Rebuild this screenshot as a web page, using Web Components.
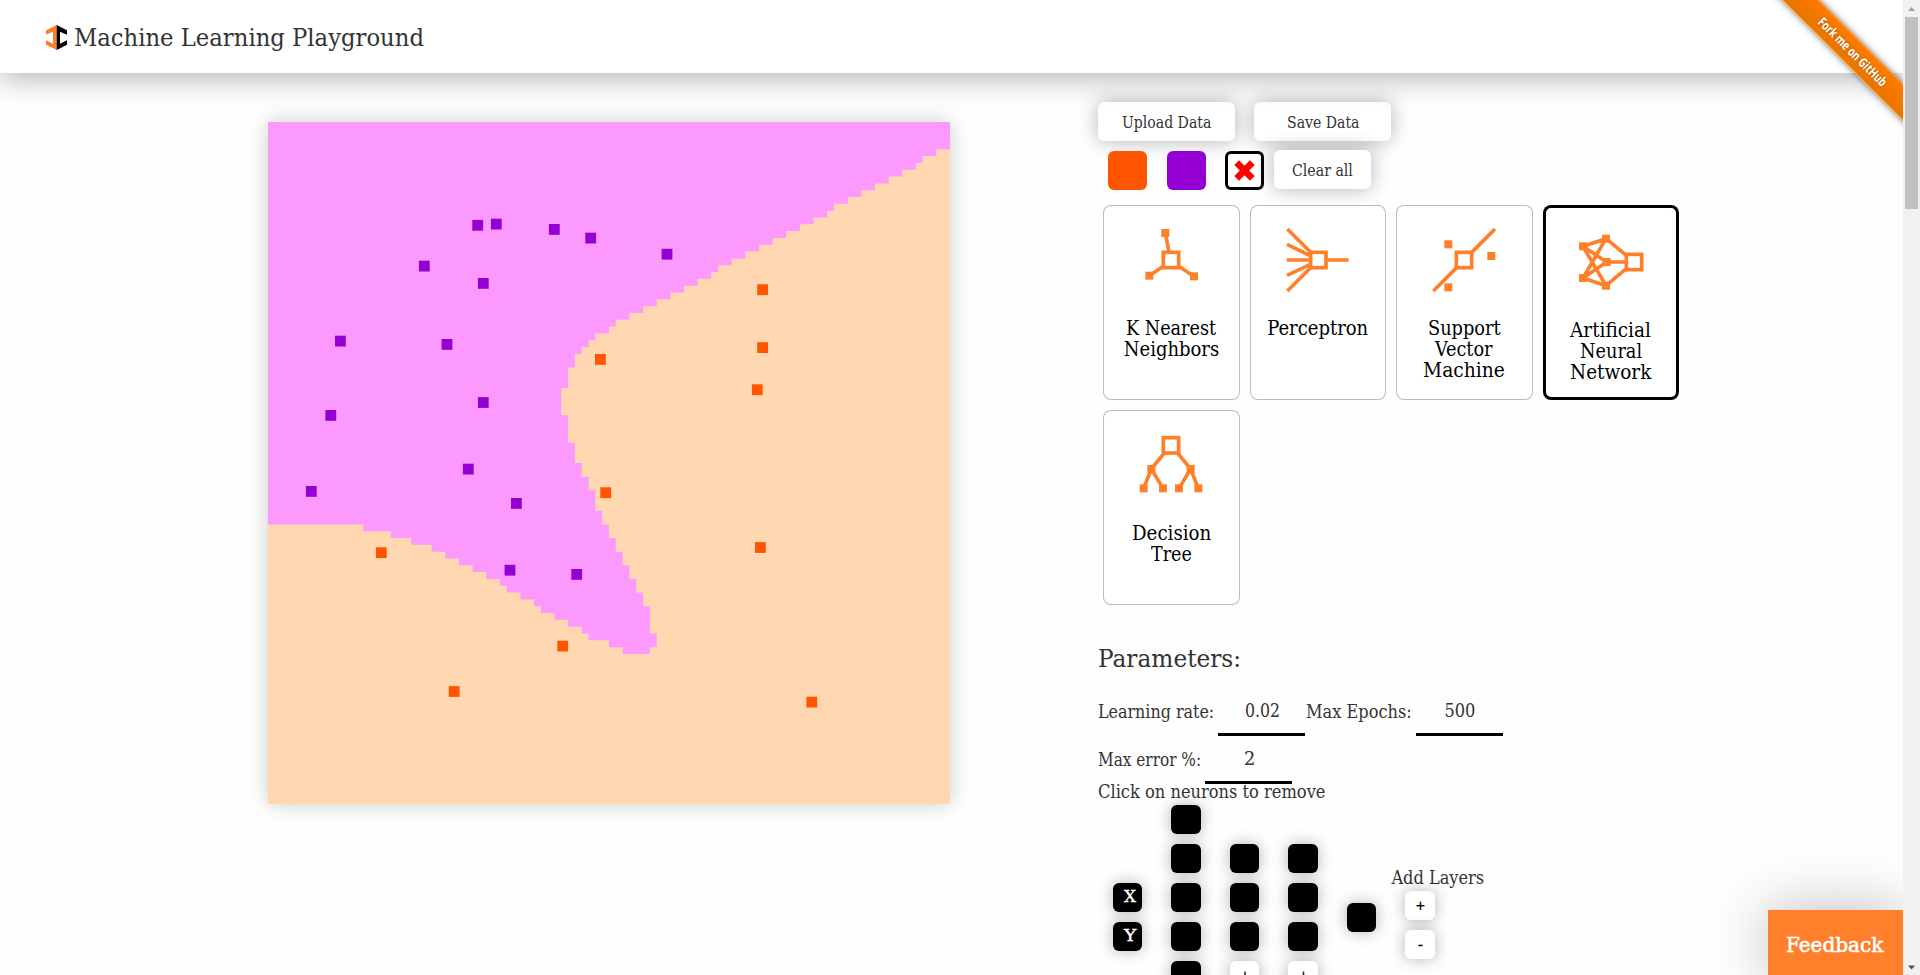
<!DOCTYPE html>
<html lang="en">
<head>
<meta charset="utf-8">
<title>Machine Learning Playground</title>
<style>
html,body{margin:0;height:975px;overflow:hidden;background:#fefefe}
body{font-family:"Roboto Slab","DejaVu Serif Condensed","DejaVu Serif",serif;color:#333}
</style>
</head>
<body>
<ml-app></ml-app>
<script>
const define = (name, css, html, setup) => customElements.define(name, class extends HTMLElement {
  connectedCallback() {
    if (this.shadowRoot) return;
    const t = document.createElement('template');
    t.innerHTML = `<style>${css}</style>${typeof html === 'function' ? html(this) : html}`;
    this.attachShadow({ mode: 'open' }).append(t.content.cloneNode(true));
    if (setup) setup(this, this.shadowRoot);
  }
});

// Text condensed horizontally to a set advance width
define('fit-text', ':host{display:inline-block;white-space:nowrap;text-align:left}span{display:inline-block;transform-origin:0 50%}', '<span><slot></slot></span>', (el, root) => {
  const span = root.querySelector('span'), w = +el.getAttribute('w');
  const natural = span.offsetWidth;
  el.style.width = w + 'px';
  span.style.transform = `scaleX(${w / natural})`;
});

define('app-logo', ':host{display:block;width:21px;height:25px}svg{display:block}',
  `<svg width="21" height="25" viewBox="0 0 63 75"><path fill="#ff7f2a" d="M32 0L0 16v13l21-9v36L0 46v13l32 16z"/><path d="M32 0l31 16v13l-21-9v36l21-10v13L32 75z"/></svg>`);

define('app-header', `:host{display:flex;align-items:center;box-sizing:border-box;height:73px;padding-left:46px;background:#fff;position:relative;
  box-shadow:0 5px 30px rgba(0,0,0,.3)}
  app-logo{margin:2px 6.500px 0 0}h1{margin:2px 0 0;font-weight:400;font-size:24px;line-height:30px}`,
  `<app-logo></app-logo><h1><fit-text w="349.5">Machine Learning Playground</fit-text></h1>`);

define('github-ribbon', `:host{position:absolute;top:0;right:17px;width:149px;height:149px;overflow:hidden}
  .band{position:absolute;left:-2px;top:38.3px;width:200px;height:27.300px;box-sizing:border-box;transform:rotate(45deg);background:linear-gradient(#ff7b00,#e87600);
  border-top:1px solid #ff922f;border-bottom:1px solid #f5a14c;box-shadow:0 0 6px rgba(0,0,0,.5);
  color:#fff;font:bold 13px/24px "Open Sans","Noto Sans",sans-serif;text-align:center;text-shadow:0 0 3px rgba(0,0,0,.35)}`,
  `<div class="band"><fit-text w="91">Fork me on GitHub</fit-text></div>`);

define('page-scrollbar', `:host{display:flex;flex-direction:column;align-items:center;width:17px;height:975px;background:#f1f1f1;position:relative}
  svg{display:block}i{display:block;width:13px;height:192px;background:#c1c1c1;flex:none}.sp{flex:1}`,
  `<svg width="17" height="17"><path d="M5 11h7L8.500 7z" fill="#a3a3a3"/></svg><i></i><div class="sp"></div><svg width="17" height="17"><path d="M5 7.500h7l-3.500 4z" fill="#505050"/></svg>`);

// Decision regions on a 100x100 grid with the training points on top
define('data-plot', ':host{display:block;width:682px;height:682px;box-shadow:0 0 20px rgba(0,0,0,.2);flex:none}svg{display:block}', () => {
  // First purple column of each row
  const start = r => r < 59 ? 0 : [14,18,21,24,26,28,30,32,34,35,37,39,40,42,44,46,47,50,52][r - 59];
  const top = [98,96,95,93,91,89,87,85,83,82,80,78,76,74,72,70,68,66,65,63,61,59,57,55,53,51,50,48,47,46,45,45];
  // [first orange column, number of rows]
  const runs = [[44,3],[43,4],[44,4],[45,3],[46,2],[47,2],[48,3],[49,2],[50,2],[51,2],[52,2],[53,2],[54,2],[55,2],[56,4],[57,2],[56,1]];
  const ends = [100,100,100,100,...top];
  for (const [c, n] of runs) for (let i = 0; i < n; i++) ends.push(c);
  let d = `M0 0H${ends[0]}`;
  ends.forEach((c, r) => d += `H${c}V${r + 1}`);
  for (let r = ends.length - 1; r >= 0; r--) d += `H${start(r)}V${r}`;
  const purple = [[477.7,225.2],[496.3,224],[554.3,229.3],[590.7,238],[424.3,266],[483.3,283.3],[340.4,341],[447,344.3],[483.3,402.4],[330.8,415.3],[468.3,469],[311.3,491.3],[516.4,503.3],[667,254.1],[576.7,574.3],[510,570.1]];
  const orange = [[600.4,359.3],[605.7,492.6],[762.6,289.6],[762.6,347.5],[757.3,389.6],[760.4,547.4],[562.7,646],[381.3,552.6],[454.2,691.4],[811.8,702]];
  const pts = (a, f) => a.map(([x, y]) => `<rect x="${(x - 273.4).toFixed(2)}" y="${(y - 127.3).toFixed(2)}" width="10.8" height="10.8" fill="${f}"/>`).join('');
  return `<svg width="682" height="682"><rect width="682" height="682" fill="#ffd8b1"/><path transform="scale(6.82)" fill="#fb99ff" d="${d}"/>${pts(purple, '#9400d3')}${pts(orange, '#ff5500')}</svg>`;
});

define('ui-button', `:host{display:flex;align-items:center;justify-content:center;box-sizing:border-box;height:39px;border-radius:6px;background:#fff;
  box-shadow:0 0 20px rgba(0,0,0,.3);font-size:16.500px;line-height:20px;color:#333;padding-top:3px}`, '<slot></slot>');

define('color-swatch', ':host{display:block;box-sizing:border-box;width:39px;height:39px;border-radius:6px}:host([erase]){border:3px solid #000;background:#fff}svg{display:block}',
  el => el.hasAttribute('erase') ? '<svg width="33" height="33" viewBox="0 0 99 99"><path d="M26 26L73 73M73 26L26 73" stroke="#f00" stroke-width="20"/></svg>' : '');

const N = (...p) => p.map(([x, y]) => `<rect x="${x - 12}" y="${y - 12}" width="24" height="24" fill="#ff7f2a" stroke="none"/>`).join('');
const BOX = (x, y) => `<rect x="${x - 23}" y="${y - 23}" width="46" height="46"/>`;
const ICONS = {
  knn: `${BOX(204,165)}<path d="M187 84L198 141M139 212L181 184M273 214L227 184"/>${N([187,84],[139,212],[273,214])}`,
  perceptron: `${BOX(208,165)}<path d="M235 165H299M115 72L184 141M114 118L184 152M113 165H184M114 211L184 178M115 258L184 189"/>`,
  svm: `${BOX(204,165)}<path d="M297 72L227 142M112 258L182 188"/>${N([157,118],[286,153],[157,247])}`,
  ann: `${BOX(276,171)}<path d="M123 124L192 101M123 124L194 171M123 124L192 242M123 219L192 101M123 219L194 171M123 219L192 242M192 101L253 151M194 171H252M192 242L253 191"/>${N([123,124],[123,219],[192,101],[194,171],[192,242])}`,
  tree: `${BOX(204,106)}<path d="M185 128L145 177L122 235M145 177L180 235M223 128L263 177L228 235M263 177L286 235"/>${N([145,177],[263,177],[122,235],[180,235],[228,235],[286,235])}`
};
define('algo-card', `:host{display:flex;flex-direction:column;align-items:center;height:195px;border-radius:8px;background:#fff;box-shadow:inset 0 0 0 1px #bbb;color:#000;font-size:20px;line-height:21px}
  :host([selected]){box-shadow:inset 0 0 0 3px #000}svg{display:block;flex:none;margin-bottom:12.500px}:host([selected]) svg{margin-bottom:14.500px}`,
  el => `<svg width="137" height="100" viewBox="0 0 411 300" fill="none" stroke="#ff7f2a" stroke-width="11">${ICONS[el.getAttribute('icon')]}</svg><slot></slot>`);

define('param-field', `:host{display:flex;align-items:flex-start;height:39px;font-size:18px}label{line-height:24px;margin:3px 4px 0 0}
  .v{box-sizing:border-box;width:87px;height:39px;border-bottom:3px solid #000;text-align:center;line-height:28px;padding-left:1px}`,
  el => `<label><fit-text w="${el.getAttribute('lw')}">${el.getAttribute('label')}</fit-text></label><div class="v"><fit-text w="${el.getAttribute('vw')}"><slot></slot></fit-text></div>`);

define('neuron-node', `:host{display:block;box-sizing:border-box;width:29.25px;height:29.25px;border-radius:6px;background:#000;color:#fff;box-shadow:0 0 15px rgba(0,0,0,.3);font-size:16.5px;line-height:28px;padding-left:11px;-webkit-text-stroke:.4px #fff}
  :host([ctl]){background:#fff;color:#000;padding:0 0 0 1px;text-align:center;font:16px/29px "Liberation Sans",Arial,sans-serif;-webkit-text-stroke:.2px #000}`, '<slot></slot>');

define('neuron-layer', ':host{display:flex;flex-direction:column;gap:9.75px;width:29.25px;flex:none}', '<slot></slot>');

define('network-editor', `:host{display:flex;align-items:flex-start;gap:29.25px;padding-left:14.900px;height:170px}
  .add{margin-left:-14px;display:flex;flex-direction:column;font-size:18px;line-height:20px}.add neuron-layer{margin:3px 0 0 14px}`,
  `<neuron-layer style="padding-top:78px"><neuron-node><fit-text w="12.5">X</fit-text></neuron-node><neuron-node><fit-text w="12.5">Y</fit-text></neuron-node></neuron-layer>
  <neuron-layer>${'<neuron-node></neuron-node>'.repeat(5)}</neuron-layer>
  ${('<neuron-layer style="padding-top:39px">' + '<neuron-node></neuron-node>'.repeat(3) + '<neuron-node ctl>+</neuron-node></neuron-layer>').repeat(2)}
  <neuron-layer style="padding-top:97.5px"><neuron-node></neuron-node></neuron-layer>
  <div class="add" style="padding-top:63px"><fit-text w="93">Add Layers</fit-text><neuron-layer><neuron-node ctl>+</neuron-node><neuron-node ctl>-</neuron-node></neuron-layer></div>`);

define('control-panel', `:host{display:block;width:600px;padding-top:29px}
  .row{display:flex}.data{gap:19px}.data ui-button{width:137px}
  .tools{height:40px;margin-top:9px;padding-left:10px}.tools color-swatch{margin:1px 20px 0 0}.tools color-swatch[erase]{margin:1px 10px 0 -1px}.tools ui-button{width:97px}
  .cards{display:grid;grid-template-columns:repeat(4,136.500px);gap:10px;margin-top:15px;padding-left:5px}
  h2{margin:39px 0 0;font-weight:400;font-size:24.500px;line-height:30px}
  .params{height:39px;margin:23px 0 0;gap:1px}.params+.params{margin-top:9px}
  p{margin:-2px 0 0;font-size:18px;line-height:20px}network-editor{margin-top:3px}`,
  `<div class="row data"><ui-button><fit-text w="89">Upload Data</fit-text></ui-button><ui-button><fit-text w="72">Save Data</fit-text></ui-button></div>
  <div class="row tools"><color-swatch style="background:#ff5500"></color-swatch><color-swatch style="background:#9400d3"></color-swatch><color-swatch erase></color-swatch><ui-button><fit-text w="61">Clear all</fit-text></ui-button></div>
  <div class="cards">
   <algo-card icon="knn"><fit-text w="90">K Nearest</fit-text><fit-text w="95">Neighbors</fit-text></algo-card>
   <algo-card icon="perceptron"><fit-text w="101">Perceptron</fit-text></algo-card>
   <algo-card icon="svm"><fit-text w="73">Support</fit-text><fit-text w="58">Vector</fit-text><fit-text w="82">Machine</fit-text></algo-card>
   <algo-card icon="ann" selected><fit-text w="81">Artificial</fit-text><fit-text w="62">Neural</fit-text><fit-text w="81">Network</fit-text></algo-card>
   <algo-card icon="tree"><fit-text w="79">Decision</fit-text><fit-text w="41">Tree</fit-text></algo-card>
  </div>
  <h2><fit-text w="143.5">Parameters:</fit-text></h2>
  <div class="row params"><param-field label="Learning rate:" lw="116" vw="35">0.02</param-field><param-field label="Max Epochs:" lw="106" vw="31">500</param-field></div>
  <div class="row params"><param-field label="Max error %:" lw="103" vw="11">2</param-field></div>
  <p><fit-text w="227">Click on neurons to remove</fit-text></p>
  <network-editor></network-editor>`);

define('feedback-tab', `:host{position:absolute;right:17px;bottom:0;width:135px;height:65px;box-sizing:border-box;padding-left:18px;background:#ff7f2a;color:#fff;font-size:20px;line-height:70px;
  -webkit-text-stroke:.5px #fff;box-shadow:0 0 60px rgba(0,0,0,.27)}`, '<fit-text w="97">Feedback</fit-text>');

define('ml-app', `:host{display:grid;grid-template-columns:1fr 17px;height:975px;position:relative;overflow:hidden}
  main{display:flex;align-items:flex-start;padding-left:268px;gap:148px}data-plot{margin-top:49px}page-scrollbar{z-index:2}.page{height:975px;min-width:0}`,
  `<div class="page"><app-header></app-header><main><data-plot></data-plot><control-panel></control-panel></main></div>
  <github-ribbon></github-ribbon><feedback-tab></feedback-tab><page-scrollbar></page-scrollbar>`);
</script>
</body>
</html>
